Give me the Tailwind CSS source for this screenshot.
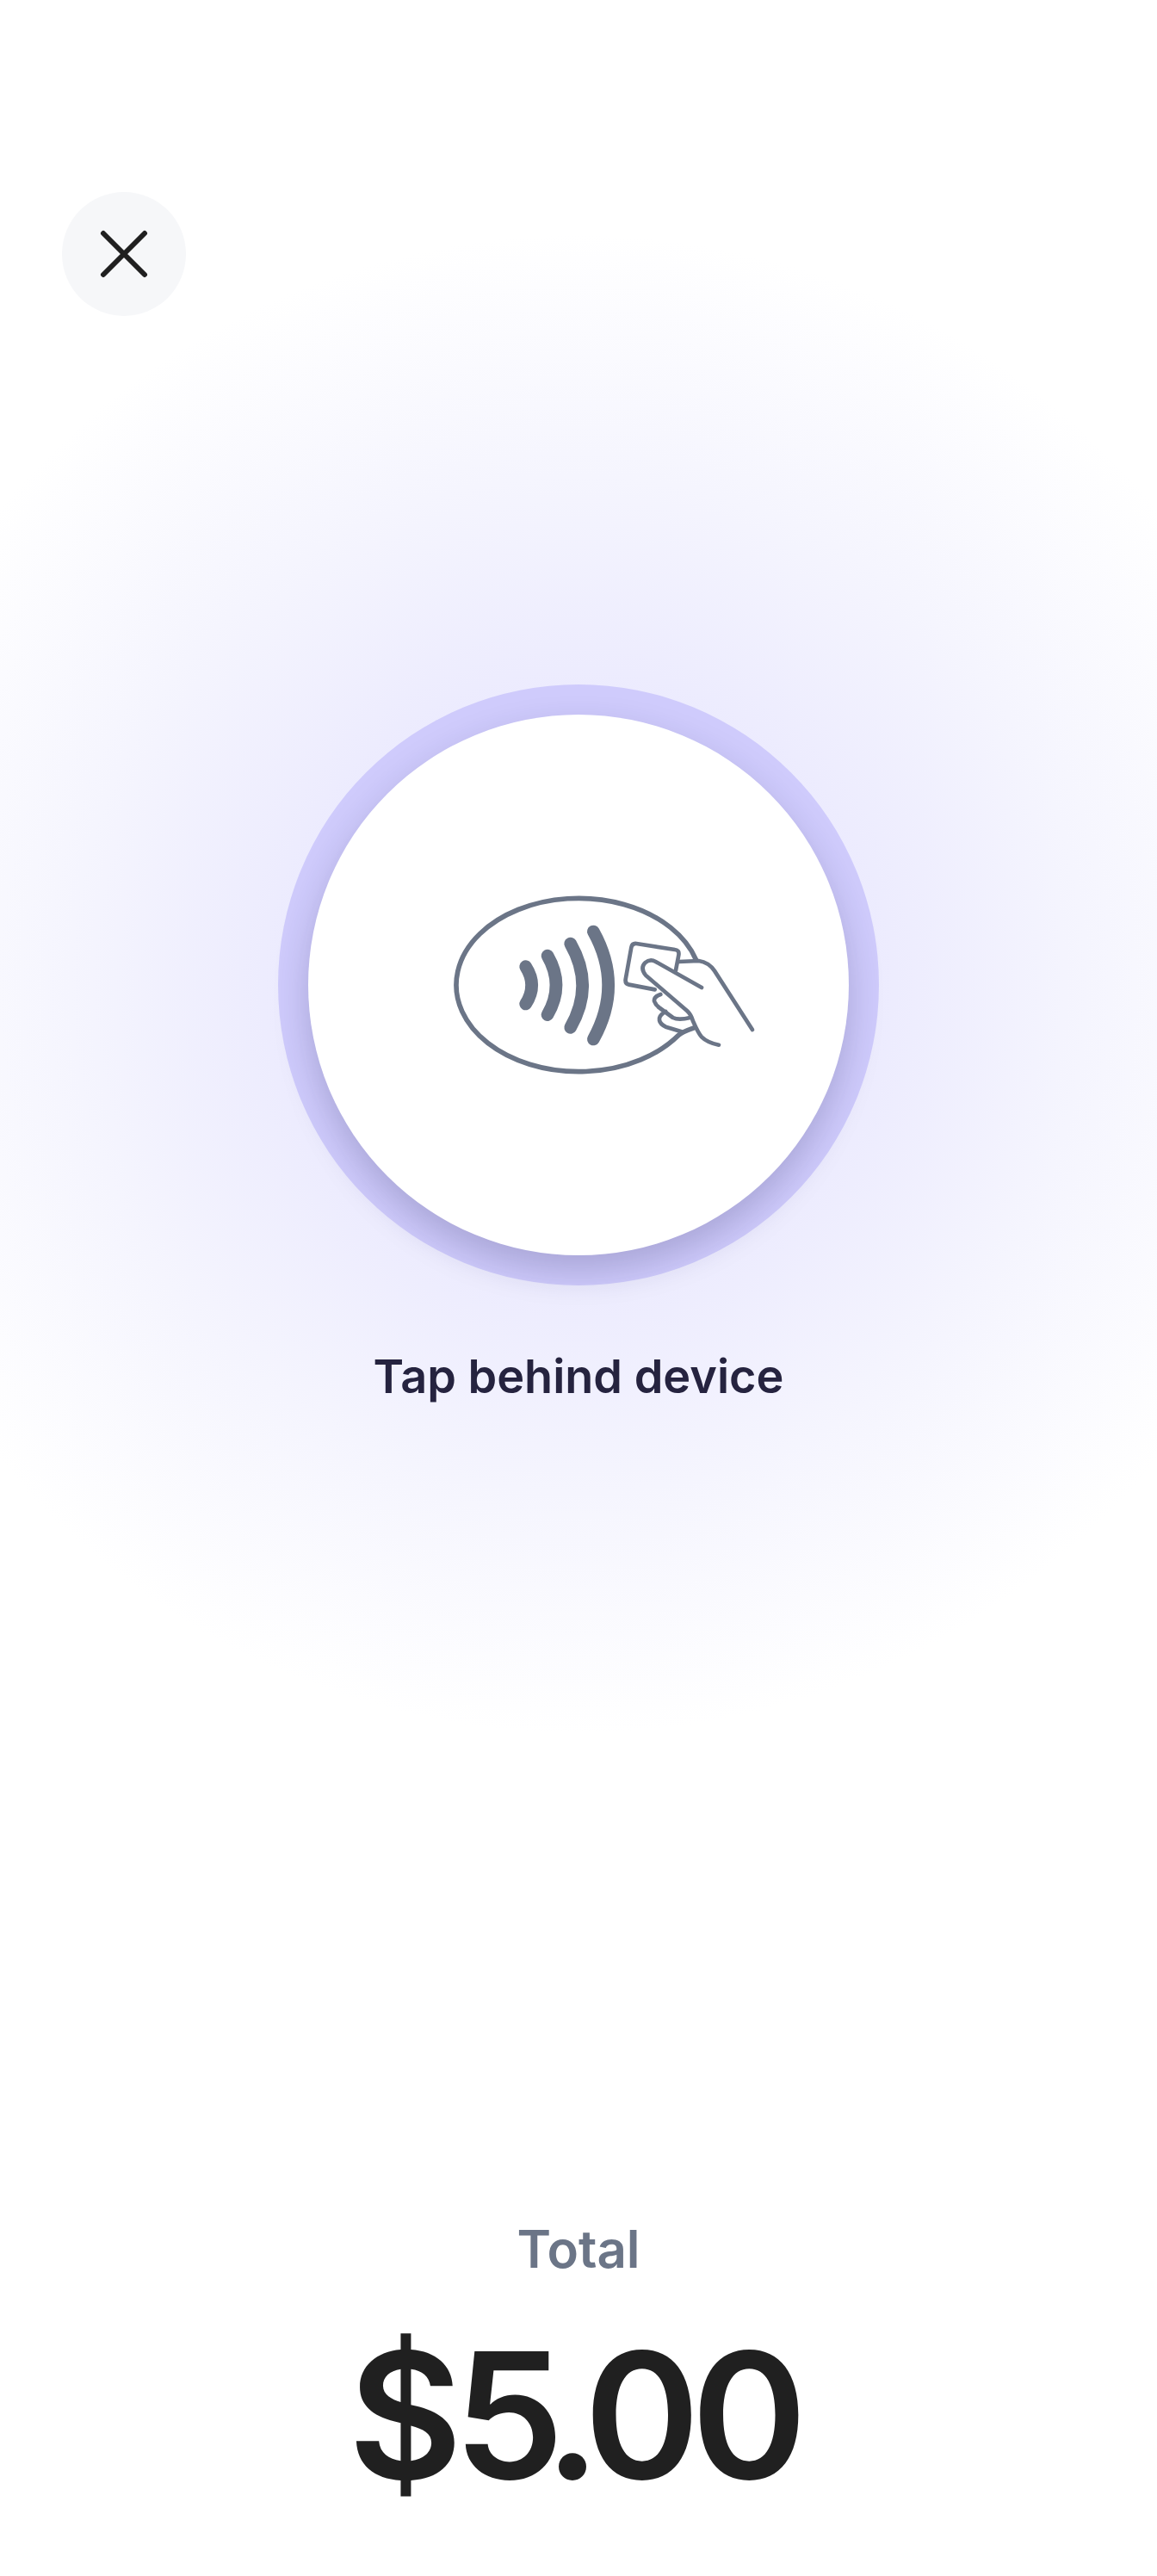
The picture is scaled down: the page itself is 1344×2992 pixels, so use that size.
<!DOCTYPE html>
<html lang="en">
<head>
<meta charset="utf-8">
<title>Tap to pay</title>
<script src="https://cdn.jsdelivr.net/npm/@tailwindcss/browser@4"></script>
</head>
<body class="bg-white">
<main class="w-[1344px] h-[2992px] overflow-hidden flex flex-col items-center font-['Inter',sans-serif] bg-[radial-gradient(circle_at_672px_1143px,#e7e6fe_0px,#ecebfe_340px,#f5f5fe_590px,#ffffff_870px)]">
  <div class="w-full pl-[72px] pt-[223px]">
    <button class="w-[144px] h-[144px] rounded-full bg-[#f6f7f9] flex items-center justify-center" aria-label="Close">
      <svg width="56" height="56" viewBox="0 0 56 56" fill="none" stroke="#202020" stroke-width="6" stroke-linecap="round"><path d="M4 4L52 52M52 4L4 52"/></svg>
    </button>
  </div>
  <div class="mt-[428px] w-[698px] h-[698px] rounded-full bg-[#cfcbfc] flex items-center justify-center">
    <div class="w-[628px] h-[628px] rounded-full bg-white shadow-[0_18px_40px_rgba(30,30,80,0.22)] flex items-center justify-center">
      <svg class="ml-[36px] mt-[14px]" width="420" height="300" viewBox="0 0 1260 900" fill="none" stroke="#6b7587" stroke-linecap="round" stroke-linejoin="round">
        <path stroke-width="17" d="M985 340A427 302 0 1 0 925 604Q935 594 980 578"/>
        <g stroke-width="44">
          <path d="M392 365Q434 430 392 495"/>
          <path d="M468 327Q528 430 468 533"/>
          <path d="M548 285Q632 431 548 577"/>
          <path d="M628 243Q732 430 628 618"/>
        </g>
        <g stroke-width="14">
          <path d="M915 378L925 325Q928 308 912 306L778 285Q763 283 760 298L740 410Q738 425 752 428L842 445"/>
          <path d="M1005 438L845 348Q825 337 808 352Q790 370 810 395L955 520Q968 532 975 555Q995 600 1005 610Q1025 630 1065 638"/>
          <path d="M925 348L995 345Q1030 350 1050 380L1182 585"/>
          <path d="M862 462Q838 470 840 485Q845 500 860 510L905 543Q925 553 965 543"/>
          <path d="M880 522Q855 535 858 552Q860 565 880 575L935 592"/>
        </g>
      </svg>
    </div>
  </div>
  <p class="mt-[74px] text-[54px] leading-[64px] font-semibold text-[#25233f]">Tap behind device</p>
  <p class="mt-[945px] text-[60px] leading-[72px] font-semibold text-[#6b7587]">Total</p>
  <p class="mt-[37px] pr-[12px] text-[204px] leading-[240px] font-semibold tracking-[-10px] text-[#202020]"><span>$</span><span class="tracking-[-23px]">5</span><span class="tracking-[-19px]">.</span><span>00</span></p>
</main>
</body>
</html>
